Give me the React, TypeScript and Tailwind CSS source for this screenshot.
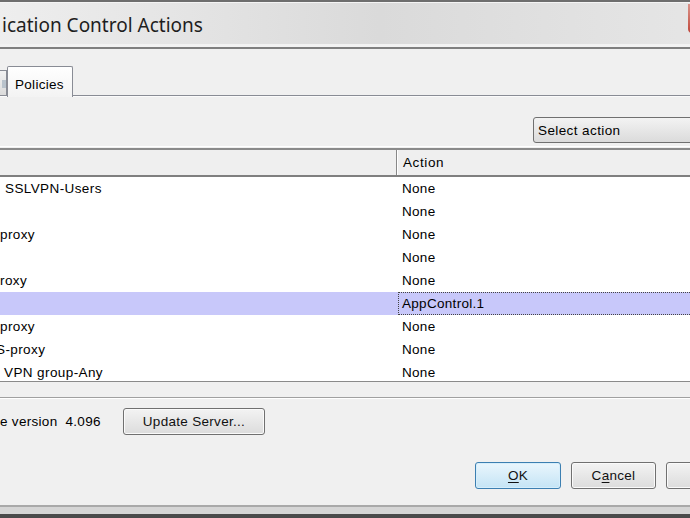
import React from 'react'

const rows = [
  { name: 'SSLVPN-Users', pad: 'pl-[5px]', action: 'None' },
  { name: '', pad: '', action: 'None' },
  { name: 'proxy', pad: 'pl-[0px]', action: 'None' },
  { name: '', pad: '', action: 'None' },
  { name: 'roxy', pad: 'pl-[0px]', action: 'None' },
  { name: '', pad: '', action: 'AppControl.1', selected: true },
  { name: 'proxy', pad: 'pl-[0px]', action: 'None' },
  { name: 'S-proxy', pad: '-ml-[4px]', action: 'None' },
  { name: 'VPN group-Any', pad: 'pl-[4px]', action: 'None' },
]

function Button({ children, primary, className = '' }: { children?: React.ReactNode; primary?: boolean; className?: string }) {
  return (
    <div
      className={
        'flex h-[27px] shrink-0 items-center justify-center rounded-[3px] border pt-[2px] text-[13.5px] tracking-[0.3px] text-[#111] ' +
        (primary
          ? 'border-[#3c7fb1] bg-gradient-to-b from-[#eaf6fd] to-[#c4e4f5] shadow-[inset_0_0_0_1px_#d6eefb]'
          : 'border-[#707070] bg-gradient-to-b from-[#f3f3f3] to-[#dcdcdc] shadow-[inset_0_0_0_1px_#fafafa]') +
        ' ' +
        className
      }
    >
      {children}
    </div>
  )
}

export default function App() {
  return (
    <div className="h-[518px] w-[690px] overflow-hidden bg-[#f0f0f0] font-['Liberation_Sans',Arial,sans-serif] text-black">
      <div className="flex w-[760px] flex-col">
        {/* window frame top */}
        <div className="h-[2px] bg-[#6e6e6e]" />
        <div className="h-[1px] bg-[#f4f4f4]" />
        <div className="flex h-[41px] bg-gradient-to-r from-[#eeeeee] via-[#dadada] to-[#e8e8e8]">
          <div className="flex flex-1 items-center pl-[2px] pt-[3px] font-['Noto_Sans',sans-serif] text-[19px] text-[#1e1e1e]">
            ication Control Actions
          </div>
          <div className="mt-[1px] h-[29px] w-[72px] rounded-bl-[4px] bg-gradient-to-b from-[#d9938a] to-[#c0453a]" />
        </div>
        <div className="h-[3px] bg-[#f2f2f2]" />
        <div className="h-[2px] bg-[#7f7f7f]" />

        {/* tabs */}
        <div className="flex h-[46px] items-end">
          <div className="mb-[-1px] flex h-[26px] w-[7px] items-center justify-end border-t border-r border-[#898c95] bg-gradient-to-b from-[#f2f2f2] to-[#dadada]">
            <div className="h-[8px] w-[4px] bg-[#b9c3cc]" />
          </div>
          <div className="relative z-10 mb-[-2px] flex h-[31px] w-[66px] items-start rounded-t-[2px] border border-b-0 border-[#898c95] bg-gradient-to-b from-[#ffffff] to-[#f3f3f3] pl-[7px] pt-[8px] text-[13.5px] tracking-[0.3px]">
            Policies
          </div>
          <div className="flex-1" />
        </div>
        <div className="h-[1px] bg-[#898c95]" />
        <div className="h-[1px] bg-[#fbfbfb]" />

        {/* tab panel */}
        <div className="flex flex-col">
          <div className="flex justify-end pr-[60px] pt-[20px]">
            <div className="flex h-[26px] w-[167px] items-center rounded-[3px] border border-[#707070] bg-gradient-to-b from-[#f3f3f3] to-[#dbdbdb] pl-[4px] pt-[2px] text-[13.5px] tracking-[0.4px]">
              Select action
            </div>
          </div>
          <div className="mt-[3px] h-[1px] bg-white" />
          <div className="mt-[1px] flex flex-col border-t-2 border-b border-[#8a8a8a]">
            <div className="flex h-[27px] border-b-2 border-[#7f7f7f] bg-[#efefef]">
              <div className="w-[397px] border-r border-[#888]" />
              <div className="flex items-center border-l border-white pl-[5px] pt-[2px] text-[13.5px] tracking-[0.6px]">Action</div>
            </div>
            <div className="flex h-[204px] flex-col overflow-hidden bg-white">
              {rows.map((r, i) => (
                <div key={i} className={'flex h-[23px] shrink-0 text-[13.5px] ' + (r.selected ? 'bg-[#c8c8fa]' : '')}>
                  <div className="flex w-[398px] items-center overflow-hidden pt-[2px]">
                    <span className={'whitespace-nowrap tracking-[0.4px] ' + r.pad}>{r.name}</span>
                  </div>
                  <div
                    className={
                      'flex flex-1 items-center pl-[3px] pt-[2px] tracking-[0.3px] ' +
                      (r.selected ? 'border border-dotted border-[#444]' : 'border border-transparent')
                    }
                  >
                    {r.action}
                  </div>
                </div>
              ))}
            </div>
          </div>
          <div className="h-[15px]" />
          <div className="h-[1px] bg-[#a0a0a0]" />
          <div className="h-[1px] bg-white" />
        </div>

        {/* bottom area */}
        <div className="flex items-center pt-[9px]">
          <div className="flex w-[123px] items-center pt-[2px] text-[13.5px] tracking-[0.3px]">
            <span>e version</span>
            <span className="ml-[8px]">4.096</span>
          </div>
          <Button className="w-[142px]">Update Server...</Button>
        </div>
        <div className="flex justify-end gap-[10px] pr-[9px] pt-[27px]">
          <Button primary className="w-[86px]">
            <span>
              <span className="underline underline-offset-2">O</span>K
            </span>
          </Button>
          <Button className="w-[85px]">
            <span>
              C<span className="underline underline-offset-2">a</span>ncel
            </span>
          </Button>
          <Button className="w-[85px]" />
        </div>
        <div className="mt-[16px] h-[2px] bg-[#a9a9a9]" />
        <div className="h-[7px] bg-[#d5d5d5]" />
        <div className="h-[10px] bg-[#4a4a4a]" />
      </div>
    </div>
  )
}
